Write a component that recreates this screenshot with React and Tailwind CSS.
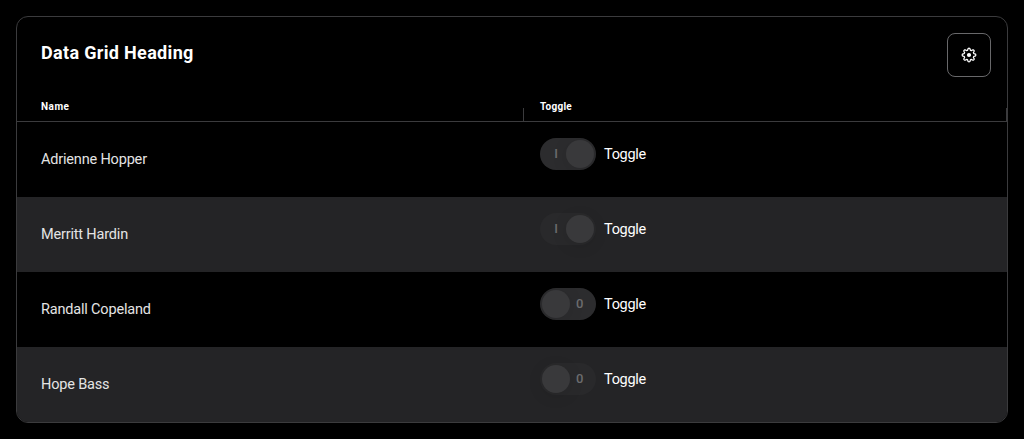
const rows = [
  { name: 'Adrienne Hopper', on: true },
  { name: 'Merritt Hardin', on: true },
  { name: 'Randall Copeland', on: false },
  { name: 'Hope Bass', on: false },
];

// Outline of an eight-toothed cog centred on (8, 8).
const cog = Array.from({ length: 96 }, (_, i) => {
  const a = (i / 96) * Math.PI * 2;
  const r = 5.85 + 0.95 * Math.tanh(2 * Math.cos(8 * a));
  return `${i ? 'L' : 'M'}${(8 + r * Math.cos(a)).toFixed(2)} ${(8 + r * Math.sin(a)).toFixed(2)}`;
}).join('') + 'Z';

function CogIcon() {
  return (
    <svg viewBox="0 0 16 16" className="h-4 w-4" fill="none">
      <path d={cog} stroke="#fff" strokeWidth="1.25" strokeLinejoin="round" />
      <circle cx="8" cy="8" r="2.1" fill="#fff" />
    </svg>
  );
}

function Toggle({ on, raised }) {
  return (
    <div className="flex h-8 items-center gap-2">
      <span
        className={`flex h-8 w-14 items-center rounded-full p-0.5 ${on ? 'flex-row-reverse' : ''} ${
          raised ? 'bg-[#29292b]' : 'overflow-hidden bg-[#2c2c2e]'
        }`}
      >
        <span className="h-7 w-7 shrink-0 rounded-full bg-[#39393b] shadow-[0_3px_16px_rgba(0,0,0,0.1)]" />
        <span className={`flex flex-1 text-[#6c6c6e] ${on ? 'justify-end pr-2' : 'justify-start pl-1.5'}`}>
          <span className="text-[13px] leading-4 font-medium">{on ? 'I' : '0'}</span>
        </span>
      </span>
      <span className="pt-px text-[14.5px] leading-5 tracking-[-0.3px] text-white">Toggle</span>
    </div>
  );
}

export default function App() {
  return (
    <main className="h-[439px] bg-black p-4 font-['Roboto',sans-serif] text-white">
      <section className="h-[407px] overflow-hidden rounded-xl border border-[#3b3b3d]">
        <header className="flex h-[76px] items-start justify-between pt-4 pr-4 pl-6">
          <h1 className="pt-2 text-[18px] leading-6 font-bold tracking-[0.33px]">Data Grid Heading</h1>
          <button aria-label="Settings" className="flex h-11 w-11 items-center justify-center rounded-lg border border-[#68686a]">
            <CogIcon />
          </button>
        </header>
        <div className="flex h-[29px] border-b border-[#3b3b3d] text-[10px] leading-3 font-bold">
          <div className="flex w-[507px] justify-between pl-6">
            <span className="pt-2 tracking-[0.5px]">Name</span>
            <span className="mt-[15px] h-[13px] w-px bg-[#3b3b3d]" />
          </div>
          <div className="flex flex-1 justify-between pl-4">
            <span className="pt-2 tracking-[0.25px]">Toggle</span>
            <span className="mt-[15px] h-[13px] w-px bg-[#3b3b3d]" />
          </div>
        </div>
        {rows.map((row, i) => (
          <div key={row.name} className={`flex h-[75px] ${i % 2 ? 'bg-[#242426]' : 'bg-black'}`}>
            <div className="flex w-[507px] items-center pl-6 text-[14.5px] leading-5 tracking-[-0.18px] text-[#e4e4e4]">
              {row.name}
            </div>
            <div className="flex items-start pt-4 pl-4">
              <Toggle on={row.on} raised={i % 2 === 1} />
            </div>
          </div>
        ))}
      </section>
    </main>
  );
}
